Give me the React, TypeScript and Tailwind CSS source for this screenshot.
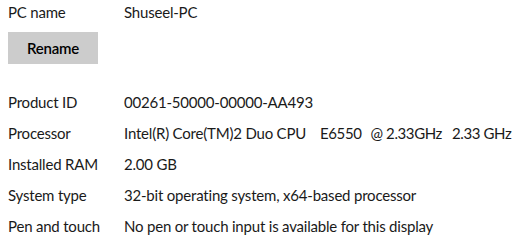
const rows: [string, React.ReactNode][] = [
  ["Product ID", "00261-50000-00000-AA493"],
  [
    "Processor",
    <span className="flex">
      <span>Intel(R) Core(TM)2 Duo CPU</span>
      <span className="ml-[14px] tracking-[-0.4px]">E6550</span>
      <span className="ml-[9px] tracking-[-0.4px]">@ 2.33GHz</span>
      <span className="ml-[10px] tracking-[-0.4px]">2.33 GHz</span>
    </span>,
  ],
  ["Installed RAM", "2.00 GB"],
  ["System type", "32-bit operating system, x64-based processor"],
  ["Pen and touch", "No pen or touch input is available for this display"],
];

export default function App() {
  return (
    <div className="min-h-screen bg-white pl-2 text-[15px] tracking-[-0.2px] text-[#1a1a1a] [font-family:Lato,sans-serif]">
      <div className="grid h-6 grid-cols-[116px_1fr] items-center">
        <span>PC name</span>
        <span>Shuseel-PC</span>
      </div>
      <button
        type="button"
        className="mt-2 h-8 w-[90px] bg-[#cccccc] font-semibold text-black"
      >
        Rename
      </button>
      <div className="mt-[23px] grid">
        {rows.map(([label, value]) => (
          <div key={label} className="grid h-[31px] grid-cols-[116px_1fr] items-center">
            <span>{label}</span>
            <span className="whitespace-nowrap">{value}</span>
          </div>
        ))}
      </div>
    </div>
  );
}
